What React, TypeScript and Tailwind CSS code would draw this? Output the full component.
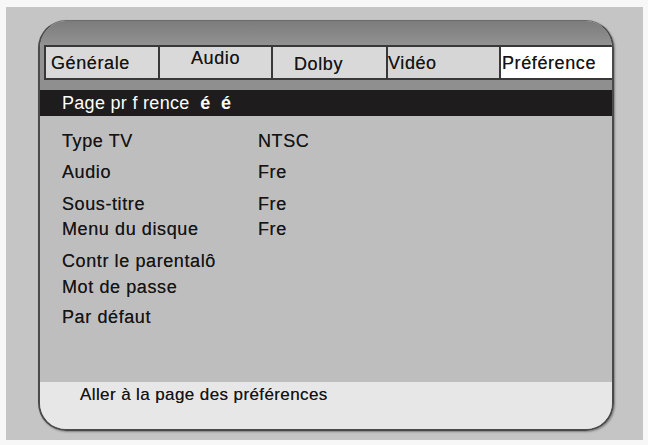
import React from 'react';

interface Tab {
  label: string;
  width: string;
  className: string;
}

const tabs: Tab[] = [
  { label: 'Générale', width: 'w-[112px]', className: 'pl-[5px] pt-[1px] bg-[#d9d9d9]' },
  { label: 'Audio', width: 'w-[113px]', className: 'justify-center pb-[9px] bg-[#d9d9d9]' },
  { label: 'Dolby', width: 'w-[115px]', className: 'pl-[21px] pt-[3px] bg-[#d9d9d9]' },
  { label: 'Vidéo', width: 'w-[113px]', className: 'pl-0 pt-[1px] bg-[#d6d6d6]' },
  { label: 'Préférence', width: 'w-[114px]', className: 'pl-[1px] pt-[1px] bg-white' },
];

const rows = [
  { label: 'Type TV', value: 'NTSC', mt: 'mt-[15px]' },
  { label: 'Audio', value: 'Fre', mt: 'mt-[11px]' },
  { label: 'Sous-titre', value: 'Fre', mt: 'mt-[12px]' },
  { label: 'Menu du disque', value: 'Fre', mt: 'mt-[5px]' },
  { label: 'Contr le parentalô', value: '', mt: 'mt-[12px]' },
  { label: 'Mot de passe', value: '', mt: 'mt-[6px]' },
  { label: 'Par défaut', value: '', mt: 'mt-[10px]' },
];

const App: React.FC = () => {
  return (
    <div className="w-[648px] h-[445px] bg-[#f7f7f7] pt-[7px] pl-[6px] pr-[5px] pb-[5px] font-['Liberation_Sans',Arial,sans-serif] [text-shadow:0_0_0.5px_rgba(0,0,0,0.6)]">
      <div className="h-full bg-[#c5c5c5] pl-[32px] pt-[13px] pr-[29px] pb-[9px]">
        {/* Panel */}
        <div className="h-full flex flex-col rounded-[28px] border-2 border-t border-[#4a4a4a] border-t-[#6e6e6e] overflow-hidden shadow-[1px_1px_2px_rgba(0,0,0,0.35)]">
          {/* Top strip */}
          <div className="h-[24px] shrink-0 bg-gradient-to-b from-[#7c7c7c] to-[#929292]" />

          {/* Tabs */}
          <div className="h-[35px] shrink-0 bg-[#929292] pl-[4px] pr-[1px] flex">
            <div className="flex border-2 border-[#383838] h-full">
              {tabs.map((tab, i) => (
                <div
                  key={tab.label}
                  className={`${tab.width} ${tab.className} ${i > 0 ? 'border-l-2 border-[#383838]' : ''} h-full flex items-center text-[18px] tracking-[0.6px] text-[#141414] leading-[20px]`}
                >
                  {tab.label}
                </div>
              ))}
            </div>
          </div>

          {/* Spacer strip */}
          <div className="h-[10px] shrink-0 bg-[#8f8f8f]" />

          {/* Title bar */}
          <div className="h-[26px] shrink-0 bg-[#1e1c1c] flex items-center pl-[22px] text-white text-[18px] tracking-[0.3px] leading-[24px] [text-shadow:none]">
            <span className="whitespace-pre">Page pr f rence  </span>
            <span className="font-bold whitespace-pre">é  é</span>
          </div>

          {/* Content */}
          <div className="flex-1 bg-[#bebebe] pl-[22px] flex flex-col">
            {rows.map((row) => (
              <div
                key={row.label}
                className={`${row.mt} flex h-[20px] leading-[20px] text-[18px] tracking-[0.6px] text-[#141414]`}
              >
                <span className="w-[196px] shrink-0">{row.label}</span>
                <span>{row.value}</span>
              </div>
            ))}
          </div>

          {/* Footer */}
          <div className="h-[47px] shrink-0 bg-[#e7e7e7] pl-[40px] pt-[3px] text-[17px] leading-[20px] tracking-[0.4px] text-[#141414]">
            Aller à la page des préférences
          </div>
        </div>
      </div>
    </div>
  );
};

export default App;
